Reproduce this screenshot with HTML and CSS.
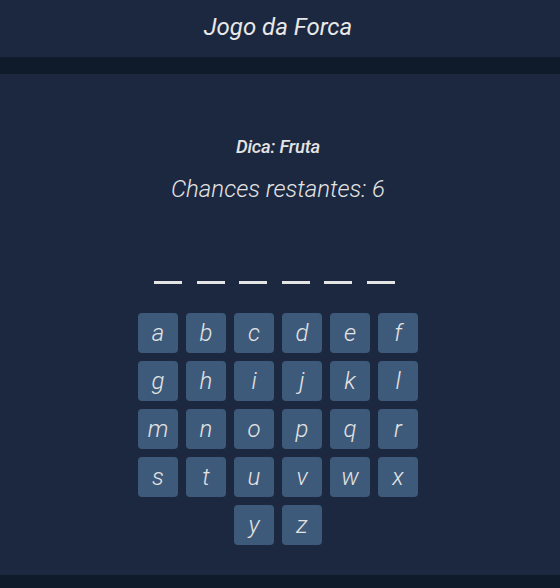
FILE: index.html
```html
<!DOCTYPE html>
<html lang="pt">
<head>
<meta charset="utf-8">
<title>Jogo da Forca</title>
<link rel="stylesheet" href="styles.css">
</head>
<body>
<header class="topbar"><h1 class="title">Jogo da Forca</h1></header>
<div class="band"></div>
<main class="game">
  <p class="hint">Dica: Fruta</p>
  <p class="chances">Chances restantes: 6</p>
  <div class="word">
    <span class="slot"></span><span class="slot"></span><span class="slot"></span><span class="slot"></span><span class="slot"></span><span class="slot"></span>
  </div>
  <div class="keyboard">
    <button class="key">a</button><button class="key">b</button><button class="key">c</button><button class="key">d</button><button class="key">e</button><button class="key">f</button>
    <button class="key">g</button><button class="key">h</button><button class="key">i</button><button class="key">j</button><button class="key">k</button><button class="key">l</button>
    <button class="key">m</button><button class="key">n</button><button class="key">o</button><button class="key">p</button><button class="key">q</button><button class="key">r</button>
    <button class="key">s</button><button class="key">t</button><button class="key">u</button><button class="key">v</button><button class="key">w</button><button class="key">x</button>
    <button class="key">y</button><button class="key">z</button>
  </div>
</main>
<footer class="bottom"></footer>
</body>
</html>
```
FILE: styles.css
```css
html, body {
  margin: 0;
  padding: 0;
  background: #1c2740;
  font-family: Roboto, "Liberation Sans", sans-serif;
  color: #e4e4e4;
}
.topbar {
  height: 57px;
  display: flex;
  align-items: center;
  justify-content: center;
  padding-right: 4px;
  background: #1c2740;
}
.title {
  margin: 0;
  font-size: 24px;
  font-weight: 400;
  font-style: italic;
  letter-spacing: 0;
  color: #e8e8e8;
  padding-bottom: 4px;
}
.band {
  height: 17px;
  background: #0f1a2b;
}
.game {
  display: flex;
  flex-direction: column;
  align-items: center;
  padding: 62px 4px 30px 0;
}
.hint {
  margin: 0;
  font-size: 18.5px;
  line-height: 22px;
  font-style: italic;
  font-weight: 500;
  letter-spacing: -0.2px;
}
.chances {
  margin: 17px 0 0;
  font-size: 24px;
  line-height: 28px;
  font-style: italic;
  font-weight: 300;
}
.word {
  display: flex;
  gap: 14.6px;
  margin-top: 78px;
  padding-right: 7px;
}
.slot {
  width: 28px;
  height: 3px;
  background: #e4e4e4;
}
.keyboard {
  margin-top: 29px;
  width: 280px;
  display: flex;
  flex-wrap: wrap;
  justify-content: center;
  gap: 8px;
}
.key {
  width: 40px;
  height: 40px;
  border: none;
  border-radius: 4px;
  background: #3e5a7a;
  color: #e4e4e4;
  font-family: Roboto, "Liberation Sans", sans-serif;
  font-size: 24px;
  font-style: italic;
  font-weight: 300;
  padding: 0;
  display: flex;
  align-items: center;
  justify-content: center;
}
.bottom {
  height: 14px;
  background: #0f1a2b;
}
```
